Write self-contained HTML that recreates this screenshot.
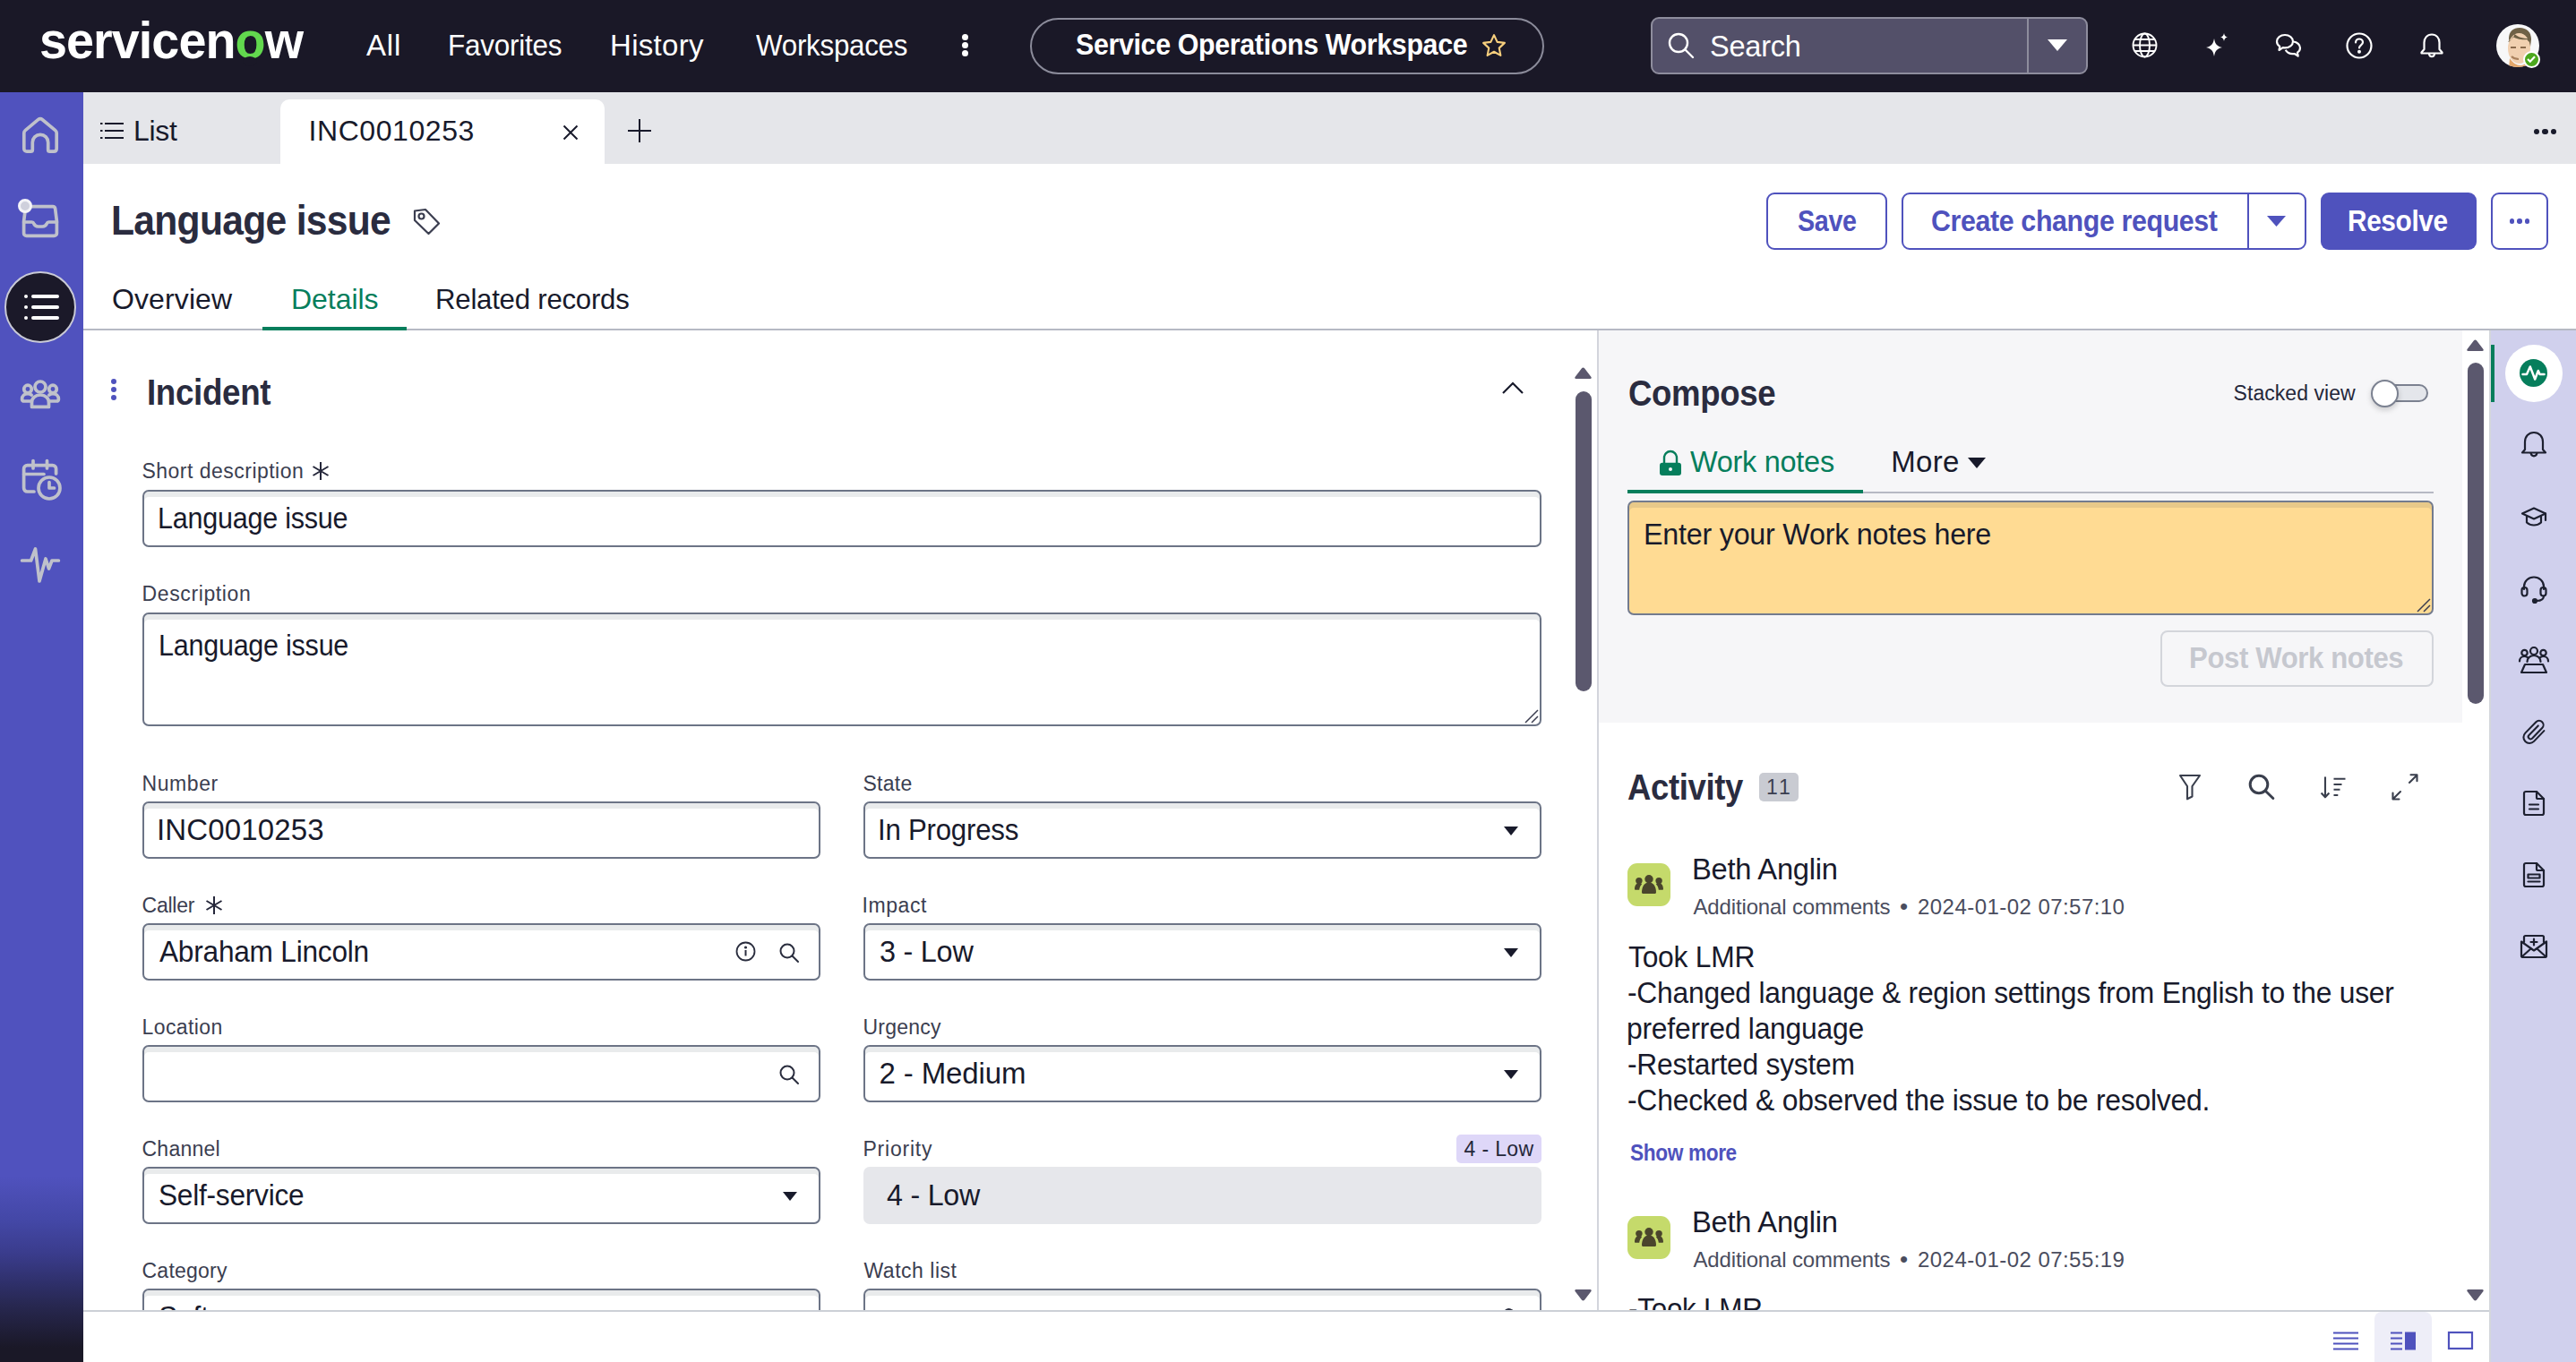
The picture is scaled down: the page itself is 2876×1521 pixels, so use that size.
<!DOCTYPE html>
<html lang="en"><head><meta charset="utf-8"><title>INC0010253 | Service Operations Workspace</title>
<style>
html,body{margin:0;padding:0}
body{width:2876px;height:1521px;position:relative;overflow:hidden;background:#fff;font-family:"Liberation Sans",sans-serif;color:#181a2b}
div,span,svg{position:absolute;box-sizing:border-box}
.t{white-space:nowrap;line-height:1em}
.t span{position:static}
.in{border:2px solid #6c7486;border-radius:7px;background:#fff;box-shadow:inset 0 6px 0 #e9ebec}
.ro{border-radius:7px;background:#e6e7eb}
svg{overflow:visible}
@media (max-width:2000px){html{zoom:.5}}
</style></head>
<body>
<div style="left:0px;top:0px;width:2876px;height:103px;background:#1a1827"></div>
<div style="left:1073.5px;top:38.0px;width:7px;height:7px;border-radius:50%;background:#fff"></div>
<div style="left:1073.5px;top:47.0px;width:7px;height:7px;border-radius:50%;background:#fff"></div>
<div style="left:1073.5px;top:56.0px;width:7px;height:7px;border-radius:50%;background:#fff"></div>
<div style="left:1150px;top:19.5px;width:574px;height:63px;border:2px solid #8b8b9a;border-radius:32px"></div>
<svg style="left:1653px;top:36px" width="30" height="30" viewBox="0 0 24 24" fill="none" stroke="#f7cf7d" stroke-width="1.7" stroke-linejoin="round"><path d="M12 2.5l2.9 6.2 6.6.8-4.9 4.6 1.3 6.6-5.9-3.3-5.9 3.3 1.3-6.6L2.5 9.5l6.6-.8z"/></svg>
<div style="left:1843px;top:19px;width:488px;height:64px;background:#535069;border:2px solid #8e8d9d;border-radius:9px"></div>
<div style="left:2263px;top:21px;width:2px;height:60px;background:#8e8d9d"></div>
<svg style="left:1862px;top:36px" width="30" height="30" viewBox="0 0 30 30" fill="none" stroke="#fff" stroke-width="2.4" stroke-linecap="round"><circle cx="12" cy="12" r="10"/><path d="M19.5 19.5L28 28"/></svg>
<svg style="left:2286px;top:44px" width="22" height="13" viewBox="0 0 22 13"><path d="M0 0h22L11 13z" fill="#fff"/></svg>
<svg style="left:2380px;top:36px" width="29" height="29" viewBox="0 0 29 29" fill="none" stroke="#fff" stroke-width="1.9"><circle cx="14.5" cy="14.5" r="13"/><ellipse cx="14.5" cy="14.5" rx="5.5" ry="13"/><path d="M1.5 14.5h26M3.5 8h22M3.5 21h22"/></svg>
<svg style="left:2460px;top:36px" width="30" height="30" viewBox="0 0 30 30" fill="#fff"><path d="M12 7c1 6 3 8.5 9 10-6 1.500-8 4-9 10-1-6-3-8.500-9-10 6-1.500 8-4 9-10z"/><path d="M23 1c.5 2.800 1.400 3.800 4 4.500-2.600.7-3.500 1.700-4 4.500-.5-2.800-1.400-3.800-4-4.500 2.600-.7 3.500-1.700 4-4.500z"/></svg>
<svg style="left:2540px;top:36px" width="30" height="30" viewBox="0 0 30 30" fill="none" stroke="#fff" stroke-width="2.2" stroke-linejoin="round"><path d="M11 3c-5 0-9 3.200-9 7.200 0 2.300 1.300 4.300 3.300 5.600L4.500 20l4.300-2.800c.7.100 1.400.200 2.200.200 5 0 9-3.200 9-7.200S16 3 11 3z"/><path d="M20.500 10.500c4.200.5 7.500 3.400 7.500 6.900 0 2.100-1.200 4-3 5.200l.7 4-3.900-2.600c-.7.100-1.300.200-2 .200-3.600 0-6.700-1.800-8-4.400"/></svg>
<svg style="left:2619px;top:36px" width="30" height="30" viewBox="0 0 30 30" fill="none" stroke="#fff" stroke-width="2.2" stroke-linecap="round"><circle cx="15" cy="15" r="13.500"/><path d="M11 11.500c0-2.300 1.800-4 4-4s4 1.600 4 3.800c0 3-4 3.200-4 6.200"/><circle cx="15" cy="21.700" r="0.900" fill="#fff"/></svg>
<svg style="left:2700px;top:36px" width="30" height="30" viewBox="0 0 30 30" fill="none" stroke="#fff" stroke-width="2.2" stroke-linejoin="round" stroke-linecap="round"><path d="M15 2.500c-5.200 0-8.500 4-8.500 9v7.500l-3 3.500v1h23v-1l-3-3.500V11.500c0-5-3.300-9-8.500-9z"/><path d="M12 24.500c.4 1.700 1.500 2.700 3 2.700s2.600-1 3-2.700"/></svg>
<svg style="left:2787px;top:27px" width="48" height="48" viewBox="0 0 48 48"><defs><clipPath id="avc"><circle cx="24" cy="24" r="24"/></clipPath></defs><g clip-path="url(#avc)"><rect width="48" height="48" fill="#f7f7f8"/><path d="M14 16c0-8 5-12 12-12 8 0 13 5 13 13l-1 8H15z" fill="#6f6146"/><ellipse cx="25.500" cy="27" rx="12.500" ry="17" fill="#f1d0b0"/><path d="M13.500 19c3-1 6-4 7-8 3 3 9 5 16 5l1 4c-2-1-3-2-3-3-6 1-13-1-16-3-1 3-3 5-5 6z" fill="#6f6146"/><path d="M15 38c3 5 8 8 12 8 3 0 7-2 9-6l2 10H14z" fill="#e3a66a"/><path d="M16 26h6M27 26h6" stroke="#8a6a4c" stroke-width="2"/><path d="M17 36c2 2 5 3 8 3" stroke="#a9805c" stroke-width="2" fill="none"/></g></svg>
<div style="left:2816.5px;top:56.5px;width:19px;height:19px;border-radius:50%;background:#4ba71d;border:2.500px solid #fff"></div>
<svg style="left:2821px;top:62px" width="10" height="8" viewBox="0 0 10 8" fill="none" stroke="#fff" stroke-width="2.200"><path d="M1 4l2.800 2.700L9 1.200"/></svg>
<div style="left:0px;top:103px;width:93px;height:1418px;background:linear-gradient(#5052be 0,#5052be 1210px,#4347a5 1262px,#3a3c8c 1297px,#2e2f68 1332px,#27274f 1356px,#1a1827 1402px)"></div>
<div style="left:93px;top:103px;width:2783px;height:80px;background:#e5e6ea"></div>
<div style="left:313px;top:111px;width:362px;height:72px;background:#fff;border-radius:10px 10px 0 0"></div>
<svg style="left:112px;top:136px" width="26" height="20" viewBox="0 0 26 20" fill="none" stroke="#181a2b" stroke-width="2"><path d="M5 2h21M5 10h21M5 18h21M0 2h2.500M0 10h2.500M0 18h2.500"/></svg>
<svg style="left:629px;top:140px" width="16" height="16" viewBox="0 0 16 16" stroke="#181a2b" stroke-width="2"><path d="M0.500 0.500l15 15M15.500 0.500l-15 15"/></svg>
<svg style="left:701px;top:133px" width="26" height="26" viewBox="0 0 26 26" stroke="#181a2b" stroke-width="2"><path d="M13 0v26M0 13h26"/></svg>
<div style="left:2828.8px;top:143.8px;width:6.4px;height:6.4px;border-radius:50%;background:#181a2b"></div>
<div style="left:2838.3px;top:143.8px;width:6.4px;height:6.4px;border-radius:50%;background:#181a2b"></div>
<div style="left:2847.8px;top:143.8px;width:6.4px;height:6.4px;border-radius:50%;background:#181a2b"></div>
<svg style="left:461px;top:232px" width="31" height="31" viewBox="0 0 31 31" fill="none" stroke="#3b3e50" stroke-width="2.2" stroke-linejoin="round"><path d="M2 3.500v10.500l15.500 15 11.500-11.500L14 2z"/><circle cx="9.500" cy="9.500" r="3"/></svg>
<div style="left:1972px;top:215px;width:135px;height:64px;border:2px solid #4f52bd;border-radius:9px"></div>
<div style="left:2123px;top:215px;width:452px;height:64px;border:2px solid #4f52bd;border-radius:9px"></div>
<div style="left:2509px;top:215px;width:2px;height:64px;background:#4f52bd"></div>
<svg style="left:2531px;top:241px" width="21" height="12" viewBox="0 0 21 12"><path d="M0 0h21L10.500 12z" fill="#4f52bd"/></svg>
<div style="left:2591px;top:215px;width:174px;height:64px;background:#4f52bd;border-radius:9px"></div>
<div style="left:2781px;top:215px;width:64px;height:64px;border:2px solid #4f52bd;border-radius:9px"></div>
<div style="left:2801.8px;top:244.3px;width:5.4px;height:5.4px;border-radius:50%;background:#4f52bd"></div>
<div style="left:2810.3px;top:244.3px;width:5.4px;height:5.4px;border-radius:50%;background:#4f52bd"></div>
<div style="left:2818.8px;top:244.3px;width:5.4px;height:5.4px;border-radius:50%;background:#4f52bd"></div>
<div style="left:93px;top:367px;width:2783px;height:2px;background:#b6b9c4"></div>
<div style="left:293px;top:365px;width:161px;height:4px;background:#067e5c"></div>
<div style="left:124px;top:423px;width:6px;height:6px;border-radius:50%;background:#4f52bd"></div>
<div style="left:124px;top:432px;width:6px;height:6px;border-radius:50%;background:#4f52bd"></div>
<div style="left:124px;top:441px;width:6px;height:6px;border-radius:50%;background:#4f52bd"></div>
<svg style="left:1677px;top:426px" width="24" height="14" viewBox="0 0 24 14" fill="none" stroke="#181a2b" stroke-width="2.2"><path d="M1 13L12 2l11 11"/></svg>
<svg style="left:348.5px;top:516px" width="18" height="20" viewBox="0 0 18 20" stroke="#25273a" stroke-width="2" fill="none"><path d="M9 0v20M0.500 5l17 10M17.500 5L0.500 15"/></svg>
<div class="in" style="left:159px;top:547px;width:1562px;height:64px;"></div>
<div class="in" style="left:159px;top:684px;width:1562px;height:127px"></div>
<svg style="left:1703px;top:793px" width="14" height="14" viewBox="0 0 14 14" stroke="#3b3e50" stroke-width="1.500"><path d="M0 14L14 0M7 14l7-7"/></svg>
<div class="in" style="left:159px;top:895px;width:757px;height:64px"></div>
<svg style="left:230px;top:1001px" width="18" height="20" viewBox="0 0 18 20" stroke="#25273a" stroke-width="2" fill="none"><path d="M9 0v20M0.500 5l17 10M17.500 5L0.500 15"/></svg>
<div class="in" style="left:159px;top:1031px;width:757px;height:64px"></div>
<svg style="left:870px;top:1053px" width="22" height="22" viewBox="0 0 22 22" fill="none" stroke="#2a2d3e" stroke-width="2" stroke-linecap="round"><circle cx="9" cy="9" r="7.500"/><path d="M14.500 14.500L21 21"/></svg>
<svg style="left:821px;top:1051px" width="23" height="23" viewBox="0 0 23 23" fill="none" stroke="#2a2d3e" stroke-width="1.800"><circle cx="11.500" cy="11.500" r="10"/><path d="M11.500 10v6.500" stroke-width="2"/><circle cx="11.500" cy="7" r="0.700" fill="#2a2d3e"/></svg>
<div class="in" style="left:159px;top:1167px;width:757px;height:64px"></div>
<svg style="left:870px;top:1189px" width="22" height="22" viewBox="0 0 22 22" fill="none" stroke="#2a2d3e" stroke-width="2" stroke-linecap="round"><circle cx="9" cy="9" r="7.500"/><path d="M14.500 14.500L21 21"/></svg>
<div class="in" style="left:159px;top:1303px;width:757px;height:64px"></div>
<svg style="left:873.5px;top:1331px" width="16" height="10" viewBox="0 0 16 10"><path d="M0 0h16L8 10z" fill="#181a2b"/></svg>
<div class="in" style="left:159px;top:1439px;width:757px;height:64px"></div>
<svg style="left:873.5px;top:1467px" width="16" height="10" viewBox="0 0 16 10"><path d="M0 0h16L8 10z" fill="#181a2b"/></svg>
<div class="in" style="left:964px;top:895px;width:757px;height:64px"></div>
<svg style="left:1678.5px;top:923px" width="16" height="10" viewBox="0 0 16 10"><path d="M0 0h16L8 10z" fill="#181a2b"/></svg>
<div class="in" style="left:964px;top:1031px;width:757px;height:64px"></div>
<svg style="left:1678.5px;top:1059px" width="16" height="10" viewBox="0 0 16 10"><path d="M0 0h16L8 10z" fill="#181a2b"/></svg>
<div class="in" style="left:964px;top:1167px;width:757px;height:64px"></div>
<svg style="left:1678.5px;top:1195px" width="16" height="10" viewBox="0 0 16 10"><path d="M0 0h16L8 10z" fill="#181a2b"/></svg>
<div class="ro" style="left:964px;top:1303px;width:757px;height:64px"></div>
<div class="in" style="left:964px;top:1439px;width:757px;height:64px"></div>
<svg style="left:1678.5px;top:1467px" width="16" height="10" viewBox="0 0 16 10"><path d="M0 0h16L8 10z" fill="#181a2b"/></svg>
<div style="left:1626px;top:1267px;width:95px;height:32px;background:#ded7f8;border-radius:5px"></div>
<div style="left:1679px;top:1460.5px;width:11px;height:8px;border:2px solid #2a2d3e;border-radius:6px 6px 0 0;border-bottom:none"></div>
<svg style="left:1758px;top:410px" width="19" height="13" viewBox="0 0 19 13"><path d="M1.500 13h16c1 0 1.600-1 1-2L11 1.200c-.7-1-2.300-1-3 0L.500 11c-.600 1 0 2 1 2z" fill="#5b586e"/></svg>
<div style="left:1759px;top:437px;width:18px;height:335px;background:#5b586e;border-radius:9px"></div>
<svg style="left:1758px;top:1440px" width="19" height="13" viewBox="0 0 19 13"><path d="M1.500 0h16c1 0 1.600 1 1 2L11 11.800c-.7 1-2.300 1-3 0L.500 2c-.600-1 0-2 1-2z" fill="#5b586e"/></svg>
<div style="left:1783px;top:369px;width:2px;height:1094px;background:#d3d5dc"></div>
<div style="left:1785px;top:369px;width:964px;height:438px;background:#f6f6f8"></div>
<div style="left:2650px;top:429px;width:61px;height:20px;background:#e4e6eb;border:2px solid #7b8190;border-radius:10px"></div>
<div style="left:2647px;top:423.5px;width:31px;height:31px;background:#fff;border:2px solid #7b8190;border-radius:50%;box-shadow:0 3px 6px rgba(0,0,0,.18)"></div>
<svg style="left:1852px;top:501px" width="26" height="30" viewBox="0 0 26 30"><path d="M6 17V10a7 7 0 0114 0v7" fill="none" stroke="#067e5c" stroke-width="2.400"/><rect x="1" y="15.800" width="24" height="14.200" rx="3" fill="#067e5c"/><circle cx="13" cy="23" r="2" fill="#f6f6f8"/></svg>
<svg style="left:2197px;top:511px" width="20" height="12" viewBox="0 0 20 12"><path d="M0 0h20L10 12z" fill="#181a2b"/></svg>
<div style="left:1817px;top:549px;width:900px;height:2px;background:#b6b9c4"></div>
<div style="left:1817px;top:547px;width:263px;height:4px;background:#067e5c"></div>
<div style="left:1817px;top:559px;width:900px;height:128px;background:#ffdb93;border:2px solid #737b8e;border-radius:7px;box-shadow:inset 0 6px 0 #e8c989"></div>
<svg style="left:2699px;top:669px" width="14" height="14" viewBox="0 0 14 14" stroke="#3b3e50" stroke-width="1.500"><path d="M0 14L14 0M7 14l7-7"/></svg>
<div style="left:2412px;top:704px;width:305px;height:63px;border:2px solid #d3d5db;border-radius:8px"></div>
<svg style="left:2754px;top:379px" width="19" height="13" viewBox="0 0 19 13"><path d="M1.500 13h16c1 0 1.600-1 1-2L11 1.200c-.7-1-2.300-1-3 0L.500 11c-.600 1 0 2 1 2z" fill="#5b586e"/></svg>
<div style="left:2755px;top:405px;width:18px;height:381px;background:#5b586e;border-radius:9px"></div>
<svg style="left:2754px;top:1440px" width="19" height="13" viewBox="0 0 19 13"><path d="M1.500 0h16c1 0 1.600 1 1 2L11 11.800c-.7 1-2.300 1-3 0L.500 2c-.600-1 0-2 1-2z" fill="#5b586e"/></svg>
<div style="left:1964px;top:863px;width:44px;height:32px;background:#c9cbd2;border-radius:5px"></div>
<svg style="left:2400px;top:840px" width="360" height="80" viewBox="0 0 360 80" fill="none" stroke="#3a3f4d" stroke-width="2.100" stroke-linejoin="round" stroke-linecap="round"><path d="M34 26h22L47.500 38v11.500l-5.500 2.800V38z" stroke-linecap="butt"/><circle cx="122" cy="36" r="9.800" stroke-width="3"/><path d="M129.500 43.500l8.300 8" stroke-width="3"/><path d="M196 27.500v22M191.600 45.500l4.400 4.800 4.400-4.800M205.500 29.800h13M205.500 36h9M205.500 41.800h7M205.500 48h4.800" stroke-linecap="butt"/><path d="M290 34l8.300-8.300M291.500 25.300h7v7M280 44l-8.300 8.300M271.500 45.500v7h7"/></svg>
<div style="left:1817px;top:964px;width:48px;height:48px;background:#c5da6b;border-radius:11px"></div>
<svg style="left:1825px;top:977px" width="32" height="21" viewBox="0 0 32 21" fill="#4a452c"><circle cx="16" cy="4.700" r="4.700"/><path d="M8 19.500c0-6.500 3-11 8-11s8 4.500 8 11c0 .9-.6 1.500-1.500 1.500h-13c-.9 0-1.500-.6-1.500-1.500z"/><circle cx="4.900" cy="6.600" r="3.700"/><path d="M0 15.800c0-3.800 1.900-6.800 4.900-6.800 1.300 0 2.400.5 3.200 1.400-1.700 1.600-2.700 3.800-2.900 6.400H1c-.6 0-1-.4-1-1z"/><circle cx="27.100" cy="6.600" r="3.700"/><path d="M32 15.800c0-3.800-1.900-6.800-4.900-6.800-1.300 0-2.400.5-3.200 1.400 1.700 1.600 2.700 3.800 2.900 6.400H31c.6 0 1-.4 1-1z"/></svg>
<div style="left:1817px;top:1358px;width:48px;height:48px;background:#c5da6b;border-radius:11px"></div>
<svg style="left:1825px;top:1371px" width="32" height="21" viewBox="0 0 32 21" fill="#4a452c"><circle cx="16" cy="4.700" r="4.700"/><path d="M8 19.500c0-6.500 3-11 8-11s8 4.500 8 11c0 .9-.6 1.500-1.500 1.500h-13c-.9 0-1.500-.6-1.500-1.500z"/><circle cx="4.900" cy="6.600" r="3.700"/><path d="M0 15.800c0-3.800 1.900-6.800 4.900-6.800 1.300 0 2.400.5 3.200 1.400-1.700 1.600-2.700 3.800-2.900 6.400H1c-.6 0-1-.4-1-1z"/><circle cx="27.100" cy="6.600" r="3.700"/><path d="M32 15.800c0-3.800-1.900-6.800-4.900-6.800-1.300 0-2.400.5-3.200 1.400 1.700 1.600 2.700 3.800 2.900 6.400H31c.6 0 1-.4 1-1z"/></svg>
<div style="left:2779px;top:369px;width:97px;height:1152px;background:#d0d0ed;border-left:2px solid #d4d7dc"></div>
<div style="left:2781px;top:385px;width:4px;height:64px;background:#067e5c"></div>
<div style="left:2796.5px;top:384.5px;width:64px;height:64px;background:#fff;border-radius:50%"></div>
<div style="left:2813px;top:401px;width:31px;height:31px;background:#067e5c;border-radius:50%"></div>
<svg style="left:2815px;top:407px" width="27" height="19" viewBox="0 0 27 19" fill="none" stroke="#fff" stroke-width="2.500" stroke-linejoin="round" stroke-linecap="round"><path d="M1.500 11h4.500l3.800-8.500 5.400 14 3.600-9.500 1.700 4h5"/></svg>
<svg style="left:2811.5px;top:480.0px" width="34" height="34" viewBox="0 0 34 34" fill="none" stroke="#1d2030" stroke-width="2.200" stroke-linejoin="round" stroke-linecap="round"><path d="M17 3c-6 0-10 4.500-10 10.500V22l-3 3.500h26L27 22v-8.500C27 7.500 23 3 17 3z"/><path d="M13.500 26c.5 2.200 1.800 3.300 3.500 3.300s3-1.100 3.500-3.300"/></svg>
<svg style="left:2811.5px;top:560.0px" width="34" height="34" viewBox="0 0 34 34" fill="none" stroke="#1d2030" stroke-width="2.200" stroke-linejoin="round" stroke-linecap="round"><path d="M17 7.500L4 13.500l13 6 13-6z"/><path d="M9 16.500V23.500c2.300 2 5 3 8 3s5.700-1 8-3v-7M30 13.500V21"/></svg>
<svg style="left:2811.5px;top:640.5px" width="34" height="34" viewBox="0 0 34 34" fill="none" stroke="#1d2030" stroke-width="2.200" stroke-linejoin="round" stroke-linecap="round"><path d="M6 17v-3c0-6 5-10.500 11-10.500S28 8 28 14v3"/><rect x="3.500" y="15" width="6" height="9.500" rx="3"/><rect x="24.500" y="15" width="6" height="9.500" rx="3"/><path d="M28 24.500c0 3.500-3 5.500-8 5.500"/><circle cx="18" cy="30" r="2" fill="#1d2030"/></svg>
<svg style="left:2811.5px;top:720.0px" width="34" height="34" viewBox="0 0 34 34" fill="none" stroke="#1d2030" stroke-width="2.200" stroke-linejoin="round" stroke-linecap="round"><circle cx="17" cy="7" r="4"/><circle cx="6.500" cy="9" r="3.200"/><circle cx="27.500" cy="9" r="3.200"/><path d="M9.500 19c0-4 3.300-7 7.500-7s7.500 3 7.500 7M1 18.500c0-3 2.300-5.500 5.500-5.500 1.300 0 2.400.4 3.300 1M33 18.500c0-3-2.300-5.500-5.500-5.500-1.300 0-2.400.4-3.300 1M3 31l4-9h20l4 9z"/></svg>
<svg style="left:2814.0px;top:802.0px" width="32" height="32" viewBox="0 0 34 34" fill="none" stroke="#1d2030" stroke-width="2.200" stroke-linejoin="round" stroke-linecap="round"><path d="M28 15L16 27.500c-3 3-7.500 3-10.300.2s-2.800-7.300.2-10.300L18.500 4.500c2-2 5.200-2 7.200 0s2 5.200 0 7.200L14 24c-1.100 1.100-2.800 1.100-3.900 0s-1.100-2.800 0-3.900L21 9"/></svg>
<svg style="left:2816.5px;top:883.0px" width="24" height="28" viewBox="0 0 24 28" fill="none" stroke="#1d2030" stroke-width="2.200" stroke-linejoin="round" stroke-linecap="round"><path d="M3 1h12l8 8v16a2 2 0 01-2 2H3a2 2 0 01-2-2V3a2 2 0 012-2z"/><path d="M15 1v6.500a1.500 1.500 0 001.500 1.500H23M7 15.500h10M7 20.500h10"/></svg>
<svg style="left:2816.5px;top:963.0px" width="24" height="28" viewBox="0 0 24 28" fill="none" stroke="#1d2030" stroke-width="2.200" stroke-linejoin="round" stroke-linecap="round"><path d="M3 1h12l8 8v16a2 2 0 01-2 2H3a2 2 0 01-2-2V3a2 2 0 012-2z"/><path d="M15 1v6.500a1.500 1.500 0 001.500 1.500H23"/><rect x="5.500" y="13.500" width="13" height="4"/><path d="M5.500 21.500h13"/></svg>
<svg style="left:2813.5px;top:1043.5px" width="30" height="26" viewBox="0 0 30 26" fill="none" stroke="#1d2030" stroke-width="2.200" stroke-linejoin="round" stroke-linecap="round"><path d="M4 8V2.500a1.500 1.500 0 011.500-1.500h19a1.500 1.500 0 011.500 1.500V8"/><path d="M1 7.500l14 10 14-10v16a1.500 1.500 0 01-1.500 1.500h-25a1.500 1.500 0 01-1.500-1.500z"/><path d="M1.500 24.500l10-9M28.500 24.500l-10-9M15 4.500v7M11.500 8h7"/></svg>
<svg style="left:25px;top:131px" width="40" height="40" viewBox="0 0 40 40" fill="none" stroke="#bfc1cb" stroke-width="3.7" stroke-linejoin="round" stroke-linecap="round"><path d="M1.800 17.500c0-1.200.5-2.200 1.400-2.900L17.500 2.700c1.500-1.200 3.500-1.200 5 0l14.300 11.900c.9.700 1.400 1.700 1.400 2.900V35c0 1.900-1.300 3.200-3.200 3.200h-4.300c-1.200 0-2-.8-2-2V28c0-4.800-3.800-8.600-8.700-8.600s-8.700 3.800-8.700 8.600v8.200c0 1.200-.8 2-2 2H5c-1.900 0-3.200-1.300-3.200-3.200z"/></svg>
<svg style="left:25px;top:229px" width="40" height="36" viewBox="0 0 40 36" fill="none" stroke="#bfc1cb" stroke-width="3.7" stroke-linejoin="round" stroke-linecap="round"><path d="M6 1.600h28c1.400 0 2.300.8 2.600 2.200L38.400 18v13.400c0 1.700-1.300 3-3 3H4.600c-1.700 0-3-1.300-3-3V18L3.400 3.800"/><path d="M1.600 19h9c1 0 1.700.5 2 1.400.9 2.400 2.500 3.600 5 3.600h4.800c2.500 0 4.100-1.200 5-3.600.3-.9 1-1.400 2-1.400h9"/></svg>
<div style="left:19.500px;top:222px;width:16px;height:16px;border-radius:50%;background:#cfd0dc;border:3px solid #f4f4f8"></div>
<div style="left:5px;top:303px;width:80px;height:80px;border-radius:50%;background:#1b1929;border:2px solid #c9cad6"></div>
<div style="left:35px;top:329px;width:30.5px;height:4.2px;background:#fff;border-radius:2px"></div>
<div style="left:26.8px;top:329px;width:4.2px;height:4.2px;background:#fff;border-radius:50%"></div>
<div style="left:35px;top:341px;width:30.5px;height:4.2px;background:#fff;border-radius:2px"></div>
<div style="left:26.8px;top:341px;width:4.2px;height:4.2px;background:#fff;border-radius:50%"></div>
<div style="left:35px;top:353px;width:30.5px;height:4.2px;background:#fff;border-radius:2px"></div>
<div style="left:26.8px;top:353px;width:4.2px;height:4.2px;background:#fff;border-radius:50%"></div>
<svg style="left:23px;top:424px" width="44" height="32" viewBox="0 0 44 32" fill="none" stroke="#bfc1cb" stroke-width="3.7" stroke-linejoin="round" stroke-linecap="round"><circle cx="22" cy="8" r="6"/><path d="M12.500 30.400v-4.900c0-5 4-8.500 9.500-8.500s9.500 3.500 9.500 8.500v4.900z"/><circle cx="8" cy="10.500" r="4.300"/><path d="M11.500 24H4c-1.500 0-2.400-.9-2.400-2.300 0-3.500 2.700-6 6.400-6 1.700 0 3.100.5 4.200 1.400"/><circle cx="36" cy="10.500" r="4.300"/><path d="M32.500 24H40c1.500 0 2.400-.9 2.400-2.300 0-3.500-2.700-6-6.400-6-1.700 0-3.100.5-4.200 1.400"/></svg>
<svg style="left:25px;top:513px" width="44" height="46" viewBox="0 0 44 46" fill="none" stroke="#bfc1cb" stroke-width="3.7" stroke-linejoin="round" stroke-linecap="round"><path d="M13 36H5.600c-2.400 0-4-1.600-4-4V10.600c0-2.400 1.600-4 4-4h28c2.400 0 4 1.600 4 4V16"/><path d="M1.600 16.500H24M12 1.600V10M27.500 1.600V10"/><circle cx="30" cy="32" r="12"/><path d="M30 25.500V32h5.500"/></svg>
<svg style="left:23px;top:611px" width="44" height="40" viewBox="0 0 44 40" fill="none" stroke="#bfc1cb" stroke-width="3.7" stroke-linejoin="round" stroke-linecap="round"><path d="M1.600 15h10L16.500 2l4.500 36 7-25 3.500 11 3.500-9h7.400"/></svg>
<span class="t" style="left:44.1px;top:16.0px;font-size:58px;font-weight:700;color:#fff;letter-spacing:-1.00px;transform:scaleX(0.961);transform-origin:0 0;">servicen<span style="color:#62d84e">o</span>w</span>
<span class="t" style="left:409.0px;top:34.0px;font-size:33px;color:#fff;letter-spacing:0.83px;">All</span>
<span class="t" style="left:500.1px;top:34.0px;font-size:33px;color:#fff;letter-spacing:-0.25px;transform:scaleX(0.953);transform-origin:0 0;">Favorites</span>
<span class="t" style="left:681.0px;top:34.0px;font-size:33px;color:#fff;letter-spacing:0.30px;">History</span>
<span class="t" style="left:843.5px;top:34.0px;font-size:33px;color:#fff;letter-spacing:-0.25px;transform:scaleX(0.948);transform-origin:0 0;">Workspaces</span>
<span class="t" style="left:1200.5px;top:33.0px;font-size:33px;font-weight:700;color:#fff;letter-spacing:-0.40px;transform:scaleX(0.922);transform-origin:0 0;">Service Operations Workspace</span>
<span class="t" style="left:1908.5px;top:35.0px;font-size:33px;color:#fff;letter-spacing:-0.25px;transform:scaleX(0.986);transform-origin:0 0;">Search</span>
<span class="t" style="left:149.0px;top:130.0px;font-size:32px;letter-spacing:-0.25px;transform:scaleX(0.997);transform-origin:0 0;">List</span>
<span class="t" style="left:344.5px;top:130.0px;font-size:32px;letter-spacing:0.57px;">INC0010253</span>
<span class="t" style="left:124.0px;top:222.0px;font-size:47px;font-weight:700;color:#2a2c3f;letter-spacing:-0.80px;transform:scaleX(0.907);transform-origin:0 0;">Language issue</span>
<span class="t" style="left:2007.0px;top:230.0px;font-size:33px;font-weight:700;color:#4f52bd;letter-spacing:-0.40px;transform:scaleX(0.869);transform-origin:0 0;">Save</span>
<span class="t" style="left:2156.1px;top:230.0px;font-size:33px;font-weight:700;color:#4f52bd;letter-spacing:-0.40px;transform:scaleX(0.920);transform-origin:0 0;">Create change request</span>
<span class="t" style="left:2621.2px;top:230.0px;font-size:33px;font-weight:700;color:#fff;letter-spacing:-0.40px;transform:scaleX(0.903);transform-origin:0 0;">Resolve</span>
<span class="t" style="left:125.0px;top:318.3px;font-size:32px;letter-spacing:0.11px;">Overview</span>
<span class="t" style="left:325.0px;top:318.3px;font-size:32px;color:#067e5c;letter-spacing:-0.05px;">Details</span>
<span class="t" style="left:486.0px;top:318.3px;font-size:32px;letter-spacing:-0.25px;transform:scaleX(0.975);transform-origin:0 0;">Related records</span>
<span class="t" style="left:163.8px;top:417.8px;font-size:40px;font-weight:700;color:#2a2c3f;letter-spacing:-0.40px;transform:scaleX(0.920);transform-origin:0 0;">Incident</span>
<span class="t" style="left:158.5px;top:515.0px;font-size:23px;color:#3b3e50;letter-spacing:0.48px;">Short description</span>
<span class="t" style="left:176.1px;top:561.5px;font-size:33px;letter-spacing:-0.25px;transform:scaleX(0.925);transform-origin:0 0;">Language issue</span>
<span class="t" style="left:158.5px;top:651.5px;font-size:23px;color:#3b3e50;letter-spacing:0.62px;">Description</span>
<span class="t" style="left:176.8px;top:703.8px;font-size:33px;letter-spacing:-0.25px;transform:scaleX(0.924);transform-origin:0 0;">Language issue</span>
<span class="t" style="left:158.5px;top:863.5px;font-size:23px;color:#3b3e50;letter-spacing:0.57px;">Number</span>
<span class="t" style="left:175.0px;top:909.5px;font-size:33px;letter-spacing:0.14px;">INC0010253</span>
<span class="t" style="left:158.5px;top:999.5px;font-size:23px;color:#3b3e50;letter-spacing:-0.22px;">Caller</span>
<span class="t" style="left:178.0px;top:1045.5px;font-size:33px;letter-spacing:-0.25px;transform:scaleX(0.959);transform-origin:0 0;">Abraham Lincoln</span>
<span class="t" style="left:158.5px;top:1135.5px;font-size:23px;color:#3b3e50;letter-spacing:0.40px;">Location</span>
<span class="t" style="left:158.5px;top:1271.5px;font-size:23px;color:#3b3e50;letter-spacing:0.24px;">Channel</span>
<span class="t" style="left:177.0px;top:1317.5px;font-size:33px;letter-spacing:-0.25px;transform:scaleX(0.959);transform-origin:0 0;">Self-service</span>
<span class="t" style="left:158.5px;top:1407.5px;font-size:23px;color:#3b3e50;letter-spacing:0.24px;">Category</span>
<span class="t" style="left:177.0px;top:1453.5px;font-size:33px;letter-spacing:-0.25px;transform:scaleX(0.967);transform-origin:0 0;">Software</span>
<span class="t" style="left:963.5px;top:863.5px;font-size:23px;color:#3b3e50;letter-spacing:0.27px;">State</span>
<span class="t" style="left:979.7px;top:909.5px;font-size:33px;letter-spacing:-0.25px;transform:scaleX(0.946);transform-origin:0 0;">In Progress</span>
<span class="t" style="left:962.5px;top:999.5px;font-size:23px;color:#3b3e50;letter-spacing:0.57px;">Impact</span>
<span class="t" style="left:981.5px;top:1045.5px;font-size:33px;letter-spacing:-0.25px;transform:scaleX(0.982);transform-origin:0 0;">3 - Low</span>
<span class="t" style="left:963.5px;top:1135.5px;font-size:23px;color:#3b3e50;letter-spacing:0.23px;">Urgency</span>
<span class="t" style="left:981.5px;top:1181.5px;font-size:33px;letter-spacing:-0.12px;">2 - Medium</span>
<span class="t" style="left:963.5px;top:1271.5px;font-size:23px;color:#3b3e50;letter-spacing:0.78px;">Priority</span>
<span class="t" style="left:990.0px;top:1317.5px;font-size:33px;letter-spacing:-0.25px;transform:scaleX(0.978);transform-origin:0 0;">4 - Low</span>
<span class="t" style="left:964.5px;top:1407.5px;font-size:23px;color:#3b3e50;letter-spacing:0.51px;">Watch list</span>
<span class="t" style="left:1634.6px;top:1271.7px;font-size:23px;color:#25273a;letter-spacing:0.33px;">4 - Low</span>
<span class="t" style="left:1817.7px;top:418.8px;font-size:40px;font-weight:700;color:#2a2c3f;letter-spacing:-0.40px;transform:scaleX(0.915);transform-origin:0 0;">Compose</span>
<span class="t" style="left:2493.6px;top:427.5px;font-size:23px;color:#25273a;letter-spacing:0.05px;">Stacked view</span>
<span class="t" style="left:1887.0px;top:499.4px;font-size:33px;color:#067e5c;letter-spacing:-0.25px;transform:scaleX(0.982);transform-origin:0 0;">Work notes</span>
<span class="t" style="left:2111.3px;top:499.4px;font-size:33px;letter-spacing:0.29px;">More</span>
<span class="t" style="left:1834.6px;top:579.7px;font-size:33px;letter-spacing:-0.25px;transform:scaleX(0.979);transform-origin:0 0;">Enter your Work notes here</span>
<span class="t" style="left:2444.1px;top:718.0px;font-size:33px;font-weight:700;color:#c6c8cf;letter-spacing:-0.40px;transform:scaleX(0.943);transform-origin:0 0;">Post Work notes</span>
<span class="t" style="left:1817.1px;top:858.7px;font-size:40px;font-weight:700;color:#2a2c3f;letter-spacing:-0.40px;transform:scaleX(0.912);transform-origin:0 0;">Activity</span>
<span class="t" style="left:1972.0px;top:868.0px;font-size:23px;color:#3b3e50;letter-spacing:3.00px;">11</span>
<span class="t" style="left:1888.5px;top:954.2px;font-size:33px;letter-spacing:-0.25px;transform:scaleX(0.991);transform-origin:0 0;">Beth Anglin</span>
<span class="t" style="left:1890.5px;top:1000.5px;font-size:24px;color:#4a4d5e;letter-spacing:-0.15px;">Additional comments</span>
<span class="t" style="left:2121.0px;top:999.0px;font-size:26px;color:#4a4d5e;">•</span>
<span class="t" style="left:2141.0px;top:1000.5px;font-size:24px;color:#4a4d5e;letter-spacing:0.45px;">2024-01-02 07:57:10</span>
<span class="t" style="left:1818.0px;top:1052.0px;font-size:33px;letter-spacing:-0.25px;transform:scaleX(0.964);transform-origin:0 0;">Took LMR</span>
<span class="t" style="left:1817.0px;top:1092.0px;font-size:33px;letter-spacing:-0.25px;transform:scaleX(0.964);transform-origin:0 0;">-Changed language &amp; region settings from English to the user</span>
<span class="t" style="left:1816.1px;top:1132.0px;font-size:33px;letter-spacing:-0.25px;transform:scaleX(0.966);transform-origin:0 0;">preferred language</span>
<span class="t" style="left:1817.0px;top:1172.0px;font-size:33px;letter-spacing:-0.25px;transform:scaleX(0.963);transform-origin:0 0;">-Restarted system</span>
<span class="t" style="left:1817.0px;top:1212.0px;font-size:33px;letter-spacing:-0.25px;transform:scaleX(0.966);transform-origin:0 0;">-Checked &amp; observed the issue to be resolved.</span>
<span class="t" style="left:1819.5px;top:1274.9px;font-size:25px;font-weight:700;color:#4f52bd;letter-spacing:-0.40px;transform:scaleX(0.906);transform-origin:0 0;">Show more</span>
<span class="t" style="left:1888.5px;top:1348.2px;font-size:33px;letter-spacing:-0.25px;transform:scaleX(0.991);transform-origin:0 0;">Beth Anglin</span>
<span class="t" style="left:1890.5px;top:1394.5px;font-size:24px;color:#4a4d5e;letter-spacing:-0.15px;">Additional comments</span>
<span class="t" style="left:2121.0px;top:1393.0px;font-size:26px;color:#4a4d5e;">•</span>
<span class="t" style="left:2141.0px;top:1394.5px;font-size:24px;color:#4a4d5e;letter-spacing:0.45px;">2024-01-02 07:55:19</span>
<span class="t" style="left:1818.0px;top:1445.0px;font-size:33px;letter-spacing:-0.25px;transform:scaleX(0.951);transform-origin:0 0;">-Took LMR</span>
<div style="left:93px;top:1463px;width:2686px;height:58px;background:#fff;border-top:2px solid #ccd0d6"></div>
<div style="left:2651px;top:1465px;width:64px;height:56px;background:#eeeef8;border-radius:8px 8px 0 0"></div>
<svg style="left:2605px;top:1487px" width="28" height="21" viewBox="0 0 28 21" stroke="#4f52bd" stroke-width="2.200" fill="none"><path d="M0 1.500h28M0 7.500h28M0 13.500h28M0 19.500h28"/></svg>
<svg style="left:2669px;top:1487px" width="28" height="21" viewBox="0 0 28 21" stroke="#4f52bd" stroke-width="2.200" fill="none"><path d="M0 1.500h13M0 7.500h13M0 13.500h13M0 19.500h13"/><rect x="16" y="0.500" width="12" height="20" fill="#4f52bd" stroke="none"/></svg>
<svg style="left:2733px;top:1487px" width="28" height="20" viewBox="0 0 28 20" stroke="#4f52bd" stroke-width="2.200" fill="none"><rect x="1" y="1" width="26" height="18"/></svg>
<svg style="left:270px;top:60px" width="18" height="10" viewBox="0 0 18 10"><ellipse cx="9" cy="8.500" rx="7.500" ry="5.500" fill="#1a1827"/></svg>
</body></html>
